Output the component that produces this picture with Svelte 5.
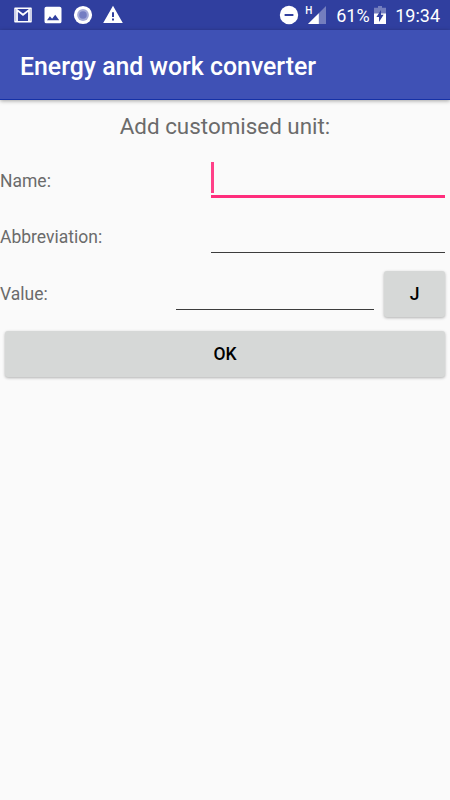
<script>
	let name = $state('');
	let abbreviation = $state('');
	let value = $state('');
	let focused = $state('name');
	let unit = 'J';
</script>

<div class="screen">
	<div class="status">
		<div class="notifications">
			<svg width="20" height="20" viewBox="0 0 20 20">
				<path d="M2 3.3h16v13.4H2z" fill="none" stroke="#fff" stroke-width="1.5" stroke-linejoin="round" />
				<path d="M4 16.4V5L10 9.8 16 5v11.4" fill="none" stroke="#fff" stroke-width="1.8" />
			</svg>
			<svg width="20" height="20" viewBox="0 0 20 20">
				<path fill="#fff" fill-rule="evenodd" d="M3.4 1.7h13.2q1.9 0 1.9 1.9v12.8q0 1.9-1.9 1.9H3.4q-1.9 0-1.9-1.9V3.6q0-1.9 1.9-1.9zM4 15.2h12.2l-4-5.4-3.1 4-2.2-2.6z" />
			</svg>
			<svg width="20" height="20" viewBox="0 0 20 20">
				<circle cx="10" cy="10" r="9.1" fill="#fff" />
				<circle cx="10" cy="10" r="5.9" fill="#a5abd8" />
				<circle cx="10" cy="10" r="3.8" fill="#747dc2" />
			</svg>
			<svg width="20" height="20" viewBox="0 0 20 20">
				<path fill="#fff" fill-rule="evenodd" d="M10 .8L19.8 18H.2zM9 7.3v4.6h2V7.3zM9 13.6v2h2v-2z" />
			</svg>
		</div>
		<div class="system">
			<svg width="20" height="20" viewBox="0 0 20 20">
				<circle cx="10" cy="10" r="9.2" fill="#fff" />
				<path fill="#303f9f" d="M5.6 9h8.8v2H5.6z" />
			</svg>
			<div class="signal">
				<span>H</span>
				<svg width="18" height="18" viewBox="0 0 18 18">
					<path fill="#747ebe" d="M18 0v18H0z" />
					<path fill="#fff" d="M10.8 7.2V18H0z" />
				</svg>
			</div>
			<span class="battery-level">61%</span>
			<svg class="battery" width="12" height="18" viewBox="0 0 12 18">
				<path fill="#747ebe" d="M4 0h4v1.8h4V8H0V1.8h4z" />
				<path fill="#fff" d="M0 7.5h12V18H0z" />
				<path fill="#303f9f" d="M7 4v4.8h2.6L5 16v-5H2.4z" />
			</svg>
			<span class="clock">19:34</span>
		</div>
	</div>

	<header>
		<h1>Energy and work converter</h1>
	</header>

	<main>
		<h2>Add customised unit:</h2>

		<div class="row">
			<label for="name">Name:</label>
			<div class="field" class:active={focused === 'name'}>
				{#if focused === 'name' && !name}
					<span class="caret"></span>
				{/if}
				<input id="name" bind:value={name} onfocus={() => (focused = 'name')} autocomplete="off" />
			</div>
		</div>

		<div class="row abbreviation">
			<label for="abbreviation">Abbreviation:</label>
			<div class="field" class:active={focused === 'abbreviation'}>
				<input id="abbreviation" bind:value={abbreviation} onfocus={() => (focused = 'abbreviation')} autocomplete="off" />
			</div>
		</div>

		<div class="row amount">
			<label for="value">Value:</label>
			<div class="field value" class:active={focused === 'value'}>
				<input id="value" bind:value={value} onfocus={() => (focused = 'value')} inputmode="decimal" />
			</div>
			<button class="unit">{unit}</button>
		</div>

		<button class="ok">OK</button>
	</main>
</div>

<style>
	:global(body) {
		margin: 0;
		background: #fafafa;
	}

	.screen {
		min-height: 800px;
		background: #fafafa;
		font-family: Roboto, sans-serif;
		color: #6b6b6b;
	}

	.status {
		display: flex;
		justify-content: space-between;
		box-sizing: border-box;
		height: 30px;
		padding: 0 10px 0 12.5px;
		background: #303f9f;
		color: #fff;
	}

	.notifications,
	.system {
		display: flex;
		align-items: center;
	}

	.notifications {
		gap: 10px;
	}

	svg {
		display: block;
		flex: none;
	}

	.signal {
		display: flex;
		margin-left: 6px;
	}

	.signal span {
		width: 3px;
		font-size: 10px;
		font-weight: 500;
		line-height: 10px;
	}

	.battery-level {
		margin-left: 10px;
		font-size: 18px;
	}

	.battery {
		margin-left: 4.5px;
	}

	.clock {
		margin-left: 9px;
		font-size: 18px;
	}

	header {
		display: flex;
		align-items: center;
		box-sizing: border-box;
		height: 70px;
		padding-left: 20px;
		background: #3f51b5;
		border-bottom: 1px solid #1531a6;
		box-shadow: 0 1px 4px rgba(0, 0, 0, 0.35);
	}

	h1 {
		margin: 0;
		padding-top: 3px;
		font-size: 24.85px;
		font-weight: 500;
		color: #fff;
	}

	h2 {
		height: 52px;
		margin: 0;
		font-size: 22.4px;
		font-weight: 400;
		line-height: 53px;
		text-align: center;
	}

	.row {
		display: flex;
		align-items: center;
		height: 57px;
		padding-right: 5px;
	}

	.row.abbreviation {
		height: 56px;
	}

	.row.amount {
		height: 58px;
	}

	label {
		flex: 1;
		font-size: 17.5px;
	}

	.field {
		display: flex;
		box-sizing: border-box;
		width: 234px;
		height: 35px;
		margin-top: -3px;
		border-bottom: 1px solid #3c3c3c;
	}

	.field.active {
		height: 36px;
		margin-top: -1px;
		border-bottom: 3px solid #ff2d7c;
	}

	.field.value {
		width: 198px;
	}

	.caret {
		width: 3px;
		height: 31px;
		background: #ff4088;
	}

	input {
		flex: 1;
		min-width: 0;
		padding: 0;
		border: 0;
		outline: none;
		background: transparent;
		font: 22px Roboto, sans-serif;
	}

	button {
		display: block;
		height: 46px;
		padding: 0;
		border: 0;
		border-radius: 3px;
		background: #d6d8d7;
		box-shadow: 0 1px 3px rgba(0, 0, 0, 0.3);
		font: 500 17.5px Roboto, sans-serif;
		color: #000;
	}

	.unit {
		width: 61px;
		margin-left: 10px;
	}

	.ok {
		width: 440px;
		margin: 8px 5px 0;
	}
</style>
